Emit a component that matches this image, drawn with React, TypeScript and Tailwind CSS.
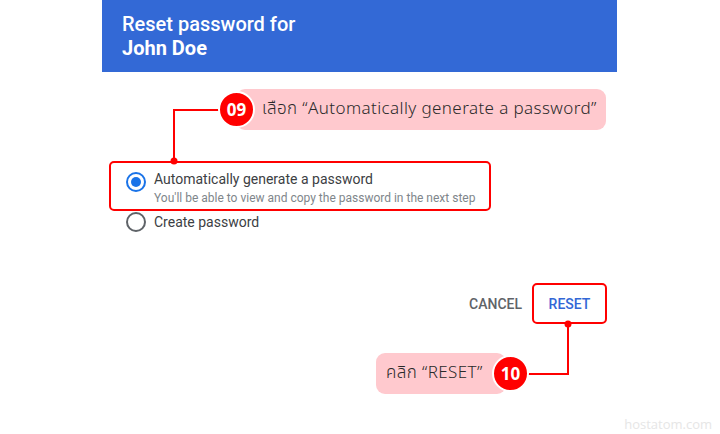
import React from "react";

const thai = { fontFamily: '"Noto Sans Thai", "Noto Sans", sans-serif' };

function Badge({ n }: { n: string }) {
  return (
    <div
      className="relative z-10 shrink-0 w-[37px] h-[37px] rounded-full bg-[#ff0000] border-[2px] border-white flex items-center justify-center text-white font-bold text-[17px] leading-none"
      style={{ fontFamily: '"Open Sans", sans-serif' }}
    >
      {n}
    </div>
  );
}

function Pill({ children, className }: { children: React.ReactNode; className: string }) {
  return (
    <div className={"h-[41px] rounded-[9px] bg-[#ffc9ce] flex items-center text-[17px] font-light tracking-[0.4px] text-[#2a2a2a] " + className} style={thai}>
      {children}
    </div>
  );
}

export default function App() {
  return (
    <div className="relative w-[720px] h-[434px] bg-white overflow-hidden" style={{ fontFamily: 'Roboto, "Liberation Sans", sans-serif' }}>
      <div className="ml-[102px] w-[515px]">
        <div className="h-[72px] bg-[#3369d6] pl-[20px] pt-[12px] text-white text-[20px] leading-[24px]">
          <div className="font-medium">Reset password for</div>
          <div className="font-bold">John Doe</div>
        </div>

        <div className="pt-[89px]">
          <div className="ml-[7px] w-[382px] border-[2px] border-[#ff0000] rounded-[5px] pl-[15px] pt-[6px] pb-[3px] flex items-start gap-[8px]">
            <div className="mt-[3px] w-[20px] h-[20px] rounded-full border-[2px] border-[#1a73e8] flex items-center justify-center">
              <div className="w-[10px] h-[10px] rounded-full bg-[#1a73e8]" />
            </div>
            <div>
              <div className="text-[14px] leading-[20px] text-[#3c4043]">Automatically generate a password</div>
              <div className="text-[12px] leading-[16px] mt-[1px] text-[#80868b]">You'll be able to view and copy the password in the next step</div>
            </div>
          </div>
          <div className="flex items-center gap-[8px] mt-[1px] pl-[24px]">
            <div className="w-[20px] h-[20px] rounded-full border-[2px] border-[#5f6368]" />
            <div className="text-[14px] leading-[20px] text-[#3c4043]">Create password</div>
          </div>
        </div>

        <div className="mt-[51px] flex justify-end items-center pr-[10px] gap-[10px] text-[14px] leading-[20px] font-medium">
          <div className="text-[#5f6368]">CANCEL</div>
          <div className="w-[75px] h-[41px] border-[2px] border-[#ff0000] rounded-[5px] flex items-center justify-center text-[#3367d6]">RESET</div>
        </div>
      </div>

      {/* connector lines */}
      <svg className="absolute left-0 top-0" width="720" height="434" viewBox="0 0 720 434">
        <path d="M220 110 H174 V161" fill="none" stroke="#ff0000" strokeWidth="2" />
        <circle cx="174" cy="161" r="3.5" fill="#ff0000" />
        <path d="M528 374 H568 V324" fill="none" stroke="#ff0000" strokeWidth="2" />
        <circle cx="568" cy="324" r="3.5" fill="#ff0000" />
      </svg>

      {/* callout 09 */}
      <div className="absolute left-[218px] top-[89px] flex items-center">
        <Badge n="09" />
        <Pill className="-ml-[19px] w-[370px] pl-[26px]">เลือก “Automatically generate a password”</Pill>
      </div>

      {/* callout 10 */}
      <div className="absolute left-[376px] top-[353px] flex items-center">
        <Pill className="w-[130px] pl-[10px]">คลิก “RESET”</Pill>
        <div className="-ml-[14px]">
          <Badge n="10" />
        </div>
      </div>

      <div className="absolute right-[8px] bottom-[2px] text-[13px] leading-[16px] text-[#e6e6e6]" style={{ fontFamily: '"Open Sans", sans-serif' }}>
        hostatom.com
      </div>
    </div>
  );
}
